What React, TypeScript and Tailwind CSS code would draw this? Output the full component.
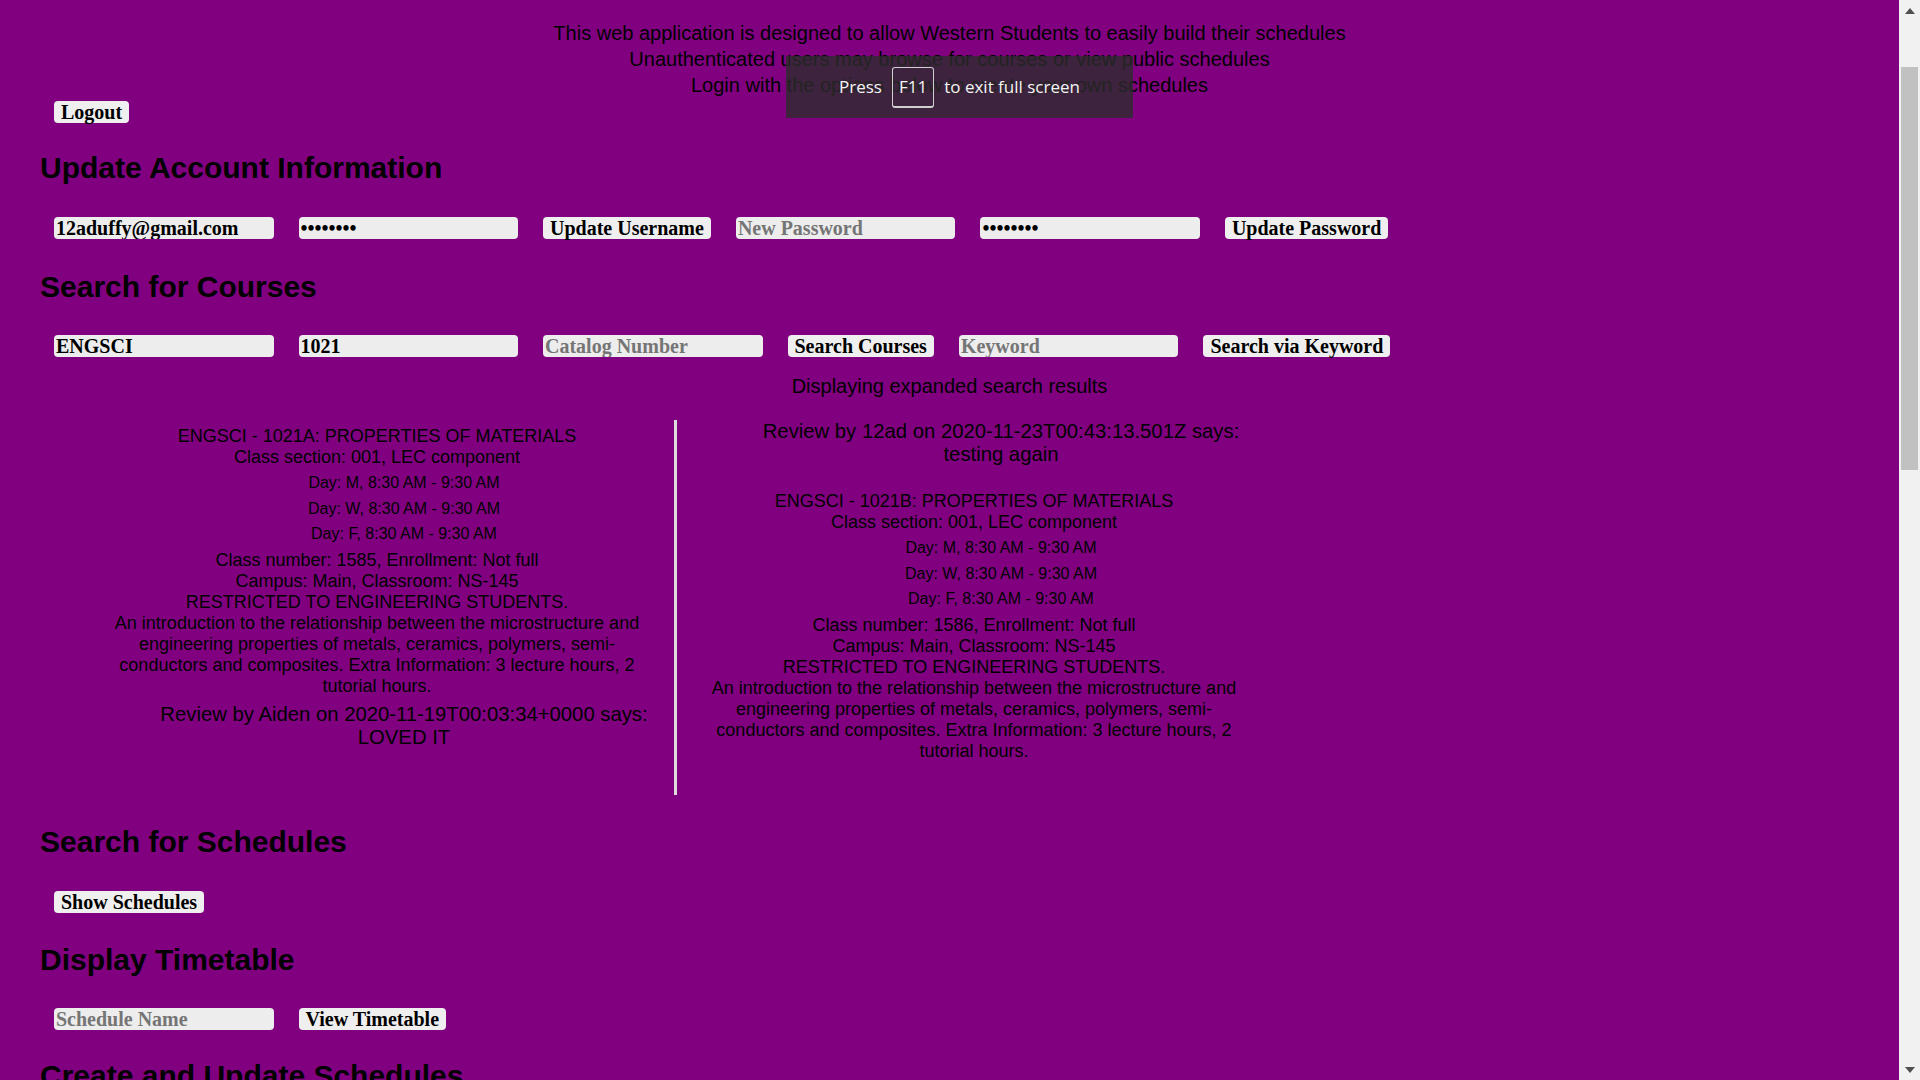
import React from "react";

const btn =
  "h-[22px] px-[7px] rounded-[4px] bg-[#efefef] text-black font-['Liberation_Serif',serif] font-bold text-[20px] leading-[22px] whitespace-nowrap";
const field =
  "w-[219.5px] h-[22px] px-[2px] rounded-[4px] bg-[#ededed] text-black font-['Liberation_Serif',serif] font-bold text-[20px] leading-[22px] outline-none placeholder:text-[#757575]";
const heading = "text-[30px] leading-[34px] font-bold text-black";

const courses = {
  a: { title: "ENGSCI - 1021A: PROPERTIES OF MATERIALS", number: "1585" },
  b: { title: "ENGSCI - 1021B: PROPERTIES OF MATERIALS", number: "1586" },
};

function Course({ title, number }: { title: string; number: string }) {
  return (
    <div className="pt-[5.5px] text-center text-[18px] leading-[21px]">
      <p>{title}</p>
      <p>Class section: 001, LEC component</p>
      <div className="flex flex-col gap-[5.5px] my-[5.5px] pl-[54px] text-[16px] leading-[20px]">
        {["M", "W", "F"].map((d) => (
          <p key={d}>Day: {d}, 8:30 AM - 9:30 AM</p>
        ))}
      </div>
      <p>Class number: {number}, Enrollment: Not full</p>
      <p>Campus: Main, Classroom: NS-145</p>
      <p>RESTRICTED TO ENGINEERING STUDENTS.</p>
      <p>
        An introduction to the relationship between the microstructure and engineering properties of metals,
        ceramics, polymers, semi-conductors and composites. Extra Information: 3 lecture hours, 2 tutorial hours.
      </p>
    </div>
  );
}

function Review({ who, when, text, className }: { who: string; when: string; text: string; className?: string }) {
  return (
    <div className={"pl-[54px] text-center text-[20.3px] leading-[23px] " + (className ?? "")}>
      <p className="whitespace-nowrap">
        Review by {who} on {when} says:
      </p>
      <p>{text}</p>
    </div>
  );
}

function Scrollbar() {
  return (
    <div className="w-[21px] h-full bg-[#f1f1f1] flex flex-col">
      <div className="h-[21px] flex items-center justify-center">
        <svg width="10" height="6" viewBox="0 0 10 6">
          <path d="M0 6 L5 0 L10 6 Z" fill="#505050" />
        </svg>
      </div>
      <div className="h-[46px]" />
      <div className="h-[403px] mx-[2px] bg-[#c1c1c1]" />
      <div className="flex-1" />
      <div className="h-[21px] flex items-center justify-center">
        <svg width="10" height="6" viewBox="0 0 10 6">
          <path d="M0 0 L5 6 L10 0 Z" fill="#505050" />
        </svg>
      </div>
    </div>
  );
}

export default function App() {
  return (
    <div className="flex h-[1080px] w-[1920px] overflow-hidden">
      <main className="relative flex-1 bg-[#800080] text-black font-['Liberation_Sans',Arial,sans-serif] pl-[40px] overflow-hidden">
        <p className="mt-[20px] -ml-[40px] text-center text-[20px] leading-[26px]">
          This web application is designed to allow Western Students to easily build their schedules
          <br />
          Unauthenticated users may browse for courses or view public schedules
          <br />
          Login with the options below to create your own schedules
        </p>

        <div className="mt-[3px] pl-[14px] flex">
          <button className={btn}>Logout</button>
        </div>

        <h2 className={heading + " mt-[28px]"}>Update Account Information</h2>
        <div className="mt-[32px] pl-[14px] flex gap-[25px]">
          <input className={field + " bg-[#e8f0fe]"} defaultValue="12aduffy@gmail.com" />
          <input className={field + " bg-[#e8f0fe]"} type="password" defaultValue="password" />
          <button className={btn}>Update Username</button>
          <input className={field} type="password" placeholder="New Password" />
          <input className={field} type="password" defaultValue="password" />
          <button className={btn}>Update Password</button>
        </div>

        <h2 className={heading + " mt-[31px]"}>Search for Courses</h2>
        <div className="mt-[31px] pl-[14px] flex gap-[25px]">
          <input className={field} defaultValue="ENGSCI" />
          <input className={field} defaultValue="1021" />
          <input className={field} placeholder="Catalog Number" />
          <button className={btn}>Search Courses</button>
          <input className={field} placeholder="Keyword" />
          <button className={btn}>Search via Keyword</button>
        </div>

        <p className="mt-[18px] -ml-[40px] text-center text-[20px] leading-[23px]">Displaying expanded search results</p>

        <div className="mt-[22px] ml-[61px] h-[375px] flex">
          <div className="w-[552px]">
            <Course {...courses.a} />
            <Review who="Aiden" when="2020-11-19T00:03:34+0000" text="LOVED IT" className="mt-[6px]" />
          </div>
          <div className="w-[3px] mx-[21px] bg-[#dddddd]" />
          <div className="w-[552px]">
            <Review who="12ad" when="2020-11-23T00:43:13.501Z" text="testing again" className="mb-[19px]" />
            <Course {...courses.b} />
          </div>
        </div>

        <h2 className={heading + " mt-[30px]"}>Search for Schedules</h2>
        <div className="mt-[32px] pl-[14px] flex">
          <button className={btn}>Show Schedules</button>
        </div>

        <h2 className={heading + " mt-[30px]"}>Display Timetable</h2>
        <div className="mt-[31px] pl-[14px] flex gap-[25px]">
          <input className={field} placeholder="Schedule Name" />
          <button className={btn}>View Timetable</button>
        </div>

        <h2 className={heading + " mt-[29px]"}>Create and Update Schedules</h2>

        <div className="absolute left-[786px] top-[56px] w-[347px] h-[62px] bg-[#2c2c2c]/80 flex items-center justify-center gap-[10px] text-[#f4f4f4] font-['Open_Sans','Noto_Sans',sans-serif] text-[17px]">
          <span>Press</span>
          <span className="h-[41px] px-[6px] flex items-center border border-b-2 border-[#cfcfcf] rounded-[3px]">F11</span>
          <span>to exit full screen</span>
        </div>
      </main>
      <Scrollbar />
    </div>
  );
}
